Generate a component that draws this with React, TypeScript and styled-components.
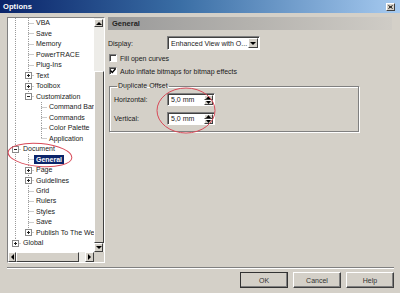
import React from "react";
import styled, { createGlobalStyle, css } from "styled-components";

const Global = createGlobalStyle`
  html, body { margin: 0; padding: 0; width: 400px; height: 293px; overflow: hidden; background: #d4d0c8; }
  * { box-sizing: border-box; }
`;

const Dialog = styled.div`
  position: relative;
  width: 400px;
  height: 293px;
  display: flex;
  flex-direction: column;
  background: #d4d0c8;
  font-family: "Liberation Sans", Tahoma, Arial, sans-serif;
  font-size: 7px;
  color: #1a1a1a;
`;

const TitleBar = styled.div`
  height: 13px;
  flex: none;
  display: flex;
  align-items: center;
  justify-content: space-between;
  padding: 0 5px 0 3px;
  background: linear-gradient(to right, #0a246a 0%, #3a6ea5 45%, #a6caf0 100%);
`;

const Title = styled.span`
  color: #fff;
  font-weight: bold;
  font-size: 7.5px;
  letter-spacing: 0.1px;
`;

const CloseBtn = styled.div`
  width: 9px;
  height: 8px;
  background: #d4d0c8;
  border: 1px solid;
  border-color: #fff #404040 #404040 #fff;
  display: flex;
  align-items: center;
  justify-content: center;
`;

const Main = styled.div`
  height: 246px;
  flex: none;
  margin-top: 4px;
  padding: 0 8px 0 7px;
  display: flex;
  gap: 3px;
`;

const TreePanel = styled.div`
  width: 98px;
  flex: none;
  background: #fff;
  border: 1px solid;
  border-color: #808080 #fff #fff #808080;
  display: grid;
  grid-template-columns: 1fr 10px;
  grid-template-rows: 1fr 10px;
  overflow: hidden;
`;

const TreeList = styled.div`
  overflow: hidden;
  display: flex;
  flex-direction: column;
`;

const Row = styled.div`
  height: 10.48px;
  flex: none;
  display: flex;
  align-items: center;
  white-space: nowrap;
`;

const Label = styled.span<{ $sel?: boolean }>`
  padding: 0 2px;
  line-height: 9.5px;
  ${(p) =>
    p.$sel &&
    css`
      background: #0a246a;
      color: #fff;
      font-weight: bold;
    `}
`;

const VScroll = styled.div`
  display: flex;
  flex-direction: column;
  padding-top: 1px;
  background: #edece8;
`;

const HScroll = styled.div`
  display: flex;
  background: #edece8;
`;

const Corner = styled.div`
  background: #d4d0c8;
`;

const ArrowBtn = styled.div<{ $w: number; $h: number }>`
  width: ${(p) => p.$w}px;
  height: ${(p) => p.$h}px;
  flex: none;
  background: #d4d0c8;
  border: 1px solid;
  border-color: #fff #404040 #404040 #fff;
  display: flex;
  align-items: center;
  justify-content: center;
`;

const Track = styled.div<{ $light: number }>`
  flex: ${(p) => p.$light};
`;

const Thumb = styled.div<{ $grow: number }>`
  flex: ${(p) => p.$grow};
  background: #d4d0c8;
  border: 1px solid;
  border-color: #fff #404040 #404040 #fff;
`;

const Right = styled.div`
  flex: 1;
  display: flex;
  flex-direction: column;
`;

const Header = styled.div`
  height: 13px;
  flex: none;
  display: flex;
  align-items: center;
  padding-left: 4px;
  font-weight: bold;
  font-size: 7.5px;
  color: #222;
  background: linear-gradient(to right, #999 0%, #b4b2ae 50%, #cfccc6 100%);
`;

const FormRow = styled.div<{ $mt: number }>`
  display: flex;
  align-items: center;
  margin-top: ${(p) => p.$mt}px;
`;

const FieldLabel = styled.span<{ $w: number }>`
  width: ${(p) => p.$w}px;
  flex: none;
`;

const Select = styled.div`
  width: 93px;
  height: 14px;
  background: #fff;
  border: 1px solid;
  border-color: #808080 #fff #fff #808080;
  box-shadow: inset 1px 1px 0 #404040;
  display: flex;
  align-items: center;
  padding: 0 1px 0 3px;
`;

const SelectText = styled.span`
  flex: 1;
  white-space: nowrap;
  overflow: hidden;
`;

const Check = styled.div`
  width: 8px;
  height: 8px;
  flex: none;
  margin-left: 1px;
  margin-right: 3px;
  background: #fff;
  border: 1px solid;
  border-color: #808080 #fff #fff #808080;
  box-shadow: inset 1px 1px 0 #404040;
  display: flex;
  align-items: center;
  justify-content: center;
`;

const Group = styled.fieldset`
  margin: 7px 0 0 1px;
  width: 250px;
  padding: 3px 0 6px 4px;
  border: 1px solid #808080;
  box-shadow: 1px 1px 0 #fff, inset 1px 1px 0 #fff;
  display: flex;
  flex-direction: column;
  gap: 6px;
`;

const Legend = styled.legend`
  padding: 0 1px;
  margin-left: 3px;
  font-size: 7px;
  line-height: 8px;
`;

const Spin = styled.div`
  width: 48px;
  height: 13px;
  background: #fff;
  border: 1px solid;
  border-color: #808080 #fff #fff #808080;
  box-shadow: inset 1px 1px 0 #404040;
  display: flex;
  align-items: stretch;
  padding: 1px 1px 1px 3px;
`;

const SpinText = styled.span`
  flex: 1;
  display: flex;
  align-items: center;
`;

const SpinBtns = styled.div`
  width: 9px;
  display: flex;
  flex-direction: column;
`;

const SpinHalf = styled.div`
  flex: 1;
  background: #d4d0c8;
  border: 1px solid;
  border-color: #fff #404040 #404040 #fff;
  display: flex;
  align-items: center;
  justify-content: center;
`;

const Separator = styled.div`
  flex: none;
  margin: 4px 6px 0 7px;
  height: 2px;
  border-top: 1px solid #808080;
  border-bottom: 1px solid #fff;
`;

const ButtonRow = styled.div`
  display: flex;
  justify-content: flex-end;
  gap: 5px;
  padding: 3px 6px 0 0;
`;

const Button = styled.div<{ $def?: boolean }>`
  width: 48px;
  height: 16px;
  display: flex;
  align-items: center;
  justify-content: center;
  background: #d4d0c8;
  border: 1px solid;
  border-color: #fff #404040 #404040 #fff;
  box-shadow: inset -1px -1px 0 #808080;
  color: #333;
  ${(p) =>
    p.$def &&
    css`
      outline: 1px solid #333;
      outline-offset: -1px;
    `}
`;

const Marks = styled.svg`
  position: absolute;
  left: 0;
  top: 0;
  pointer-events: none;
`;

type Node = {
  label: string;
  level: number;
  kind?: "plus" | "minus";
  last?: boolean;
  sel?: boolean;
  open: boolean[];
};

const ws = [true];
const rows: Node[] = [
  { label: "VBA", level: 1, open: ws },
  { label: "Save", level: 1, open: ws },
  { label: "Memory", level: 1, open: ws },
  { label: "PowerTRACE", level: 1, open: ws },
  { label: "Plug-Ins", level: 1, open: ws },
  { label: "Text", level: 1, kind: "plus", open: ws },
  { label: "Toolbox", level: 1, kind: "plus", open: ws },
  { label: "Customization", level: 1, kind: "minus", last: true, open: ws },
  { label: "Command Bars", level: 2, open: [true, false] },
  { label: "Commands", level: 2, open: [true, false] },
  { label: "Color Palette", level: 2, open: [true, false] },
  { label: "Application", level: 2, last: true, open: [true, false] },
  { label: "Document", level: 0, kind: "minus", open: [] },
  { label: "General", level: 1, sel: true, open: [true] },
  { label: "Page", level: 1, kind: "plus", open: [true] },
  { label: "Guidelines", level: 1, kind: "plus", open: [true] },
  { label: "Grid", level: 1, open: [true] },
  { label: "Rulers", level: 1, open: [true] },
  { label: "Styles", level: 1, open: [true] },
  { label: "Save", level: 1, open: [true] },
  { label: "Publish To The Web", level: 1, kind: "plus", last: true, open: [true] },
  { label: "Global", level: 0, kind: "plus", last: true, open: [] },
];

const H = 10.48;
const dot = { stroke: "#9a9a9a", strokeWidth: 1, strokeDasharray: "1 1" };

function Guides({ n }: { n: Node }) {
  const w = 13 + 13 * n.level;
  const lx = (l: number) => 7.5 + 13 * l;
  const mid = Math.round(H / 2) + 0.5;
  const x = lx(n.level);
  return (
    <svg width={w} height={H} style={{ flex: "none", display: "block" }}>
      {n.open.map((o, i) =>
        o ? <line key={i} x1={lx(i)} y1={0} x2={lx(i)} y2={H} {...dot} /> : null
      )}
      <line x1={x} y1={0} x2={x} y2={n.last ? mid : H} {...dot} />
      <line x1={x} y1={mid} x2={w} y2={mid} {...dot} />
      {n.kind && (
        <g>
          <rect x={x - 3} y={mid - 3} width={6} height={6} fill="#fff" stroke="#8a8a8a" strokeWidth={1} />
          <line x1={x - 1.5} y1={mid} x2={x + 1.5} y2={mid} stroke="#222" strokeWidth={1} />
          {n.kind === "plus" && (
            <line x1={x} y1={mid - 1.5} x2={x} y2={mid + 1.5} stroke="#222" strokeWidth={1} />
          )}
        </g>
      )}
    </svg>
  );
}

const Tri = ({ dir }: { dir: "up" | "down" | "left" | "right" }) => {
  const pts = {
    up: "0,3 3,0 6,3",
    down: "0,0 6,0 3,3",
    left: "3,0 3,6 0,3",
    right: "0,0 0,6 3,3",
  }[dir];
  const vert = dir === "up" || dir === "down";
  return (
    <svg width={vert ? 6 : 3} height={vert ? 3 : 6} style={{ display: "block" }}>
      <polygon points={pts} fill="#000" />
    </svg>
  );
};

const SmallTri = ({ up }: { up?: boolean }) => (
  <svg width={5} height={3} style={{ display: "block" }}>
    <polygon points={up ? "0,3 2.5,0 5,3" : "0,0 5,0 2.5,3"} fill="#000" />
  </svg>
);

function SpinBox({ value }: { value: string }) {
  return (
    <Spin>
      <SpinText>{value}</SpinText>
      <SpinBtns>
        <SpinHalf>
          <SmallTri up />
        </SpinHalf>
        <SpinHalf>
          <SmallTri />
        </SpinHalf>
      </SpinBtns>
    </Spin>
  );
}

export default function App() {
  return (
    <>
      <Global />
      <Dialog>
        <TitleBar>
          <Title>Options</Title>
          <CloseBtn>
            <svg width={5} height={4}>
              <path d="M0.5 0.5 L4.5 3.5 M4.5 0.5 L0.5 3.5" stroke="#000" strokeWidth={1} />
            </svg>
          </CloseBtn>
        </TitleBar>
        <Main>
          <TreePanel>
            <TreeList>
              {rows.map((n, i) => (
                <Row key={i}>
                  <Guides n={n} />
                  <Label $sel={n.sel}>{n.label}</Label>
                </Row>
              ))}
            </TreeList>
            <VScroll>
              <ArrowBtn $w={9} $h={8}>
                <Tri dir="up" />
              </ArrowBtn>
              <Track $light={44} />
              <Thumb $grow={170} />
              <ArrowBtn $w={9} $h={9}>
                <Tri dir="down" />
              </ArrowBtn>
            </VScroll>
            <HScroll>
              <ArrowBtn $w={8} $h={10}>
                <Tri dir="left" />
              </ArrowBtn>
              <Thumb $grow={62} />
              <Track $light={6} />
              <ArrowBtn $w={9} $h={10}>
                <Tri dir="right" />
              </ArrowBtn>
            </HScroll>
            <Corner />
          </TreePanel>
          <Right>
            <Header>General</Header>
            <FormRow $mt={6}>
              <FieldLabel $w={59}>Display:</FieldLabel>
              <Select>
                <SelectText>Enhanced View with O...</SelectText>
                <ArrowBtn $w={10} $h={10}>
                  <Tri dir="down" />
                </ArrowBtn>
              </Select>
            </FormRow>
            <FormRow $mt={4}>
              <Check />
              <span>Fill open curves</span>
            </FormRow>
            <FormRow $mt={5}>
              <Check>
                <svg width={6} height={6} style={{ display: "block" }}>
                  <path d="M0.5 2.5 L2.3 4.5 L5.5 0.8" stroke="#000" strokeWidth={1.3} fill="none" />
                </svg>
              </Check>
              <span>Auto inflate bitmaps for bitmap effects</span>
            </FormRow>
            <Group>
              <Legend>Duplicate Offset</Legend>
              <FormRow $mt={0}>
                <FieldLabel $w={53}>Horizontal:</FieldLabel>
                <SpinBox value="5,0 mm" />
              </FormRow>
              <FormRow $mt={0}>
                <FieldLabel $w={53}>Vertical:</FieldLabel>
                <SpinBox value="5,0 mm" />
              </FormRow>
            </Group>
          </Right>
        </Main>
        <Separator />
        <ButtonRow>
          <Button $def>OK</Button>
          <Button>Cancel</Button>
          <Button>Help</Button>
        </ButtonRow>
        <Marks width={400} height={293}>
          <ellipse cx={40} cy={155} rx={32} ry={11.5} transform="rotate(5 40 155)" fill="none" stroke="#d84a58" strokeWidth={1} />
          <ellipse cx={186} cy={110.5} rx={29} ry={22.5} fill="none" stroke="#d84a58" strokeWidth={1} />
        </Marks>
      </Dialog>
    </>
  );
}
